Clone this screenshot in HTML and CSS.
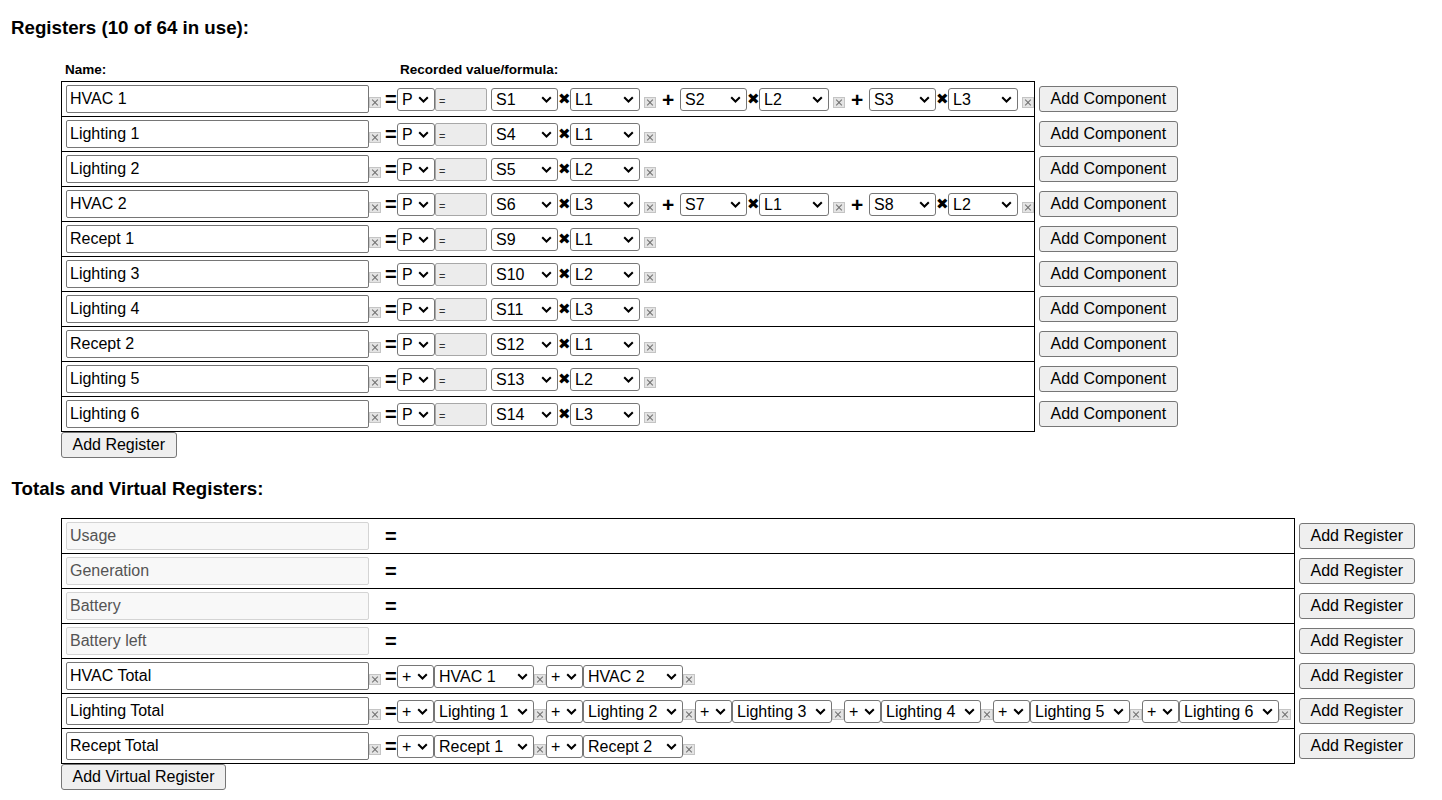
FILE: index.html
```
<!DOCTYPE html>
<html lang="en">
<head>
  <meta charset="UTF-8">
  <title>Registers</title>
  <link rel="stylesheet" href="styles.css">
</head>
<body>
  <h3 class="section-title">Registers (10 of 64 in use):</h3>
  <div class="block">
    <div class="col-labels">
      <span class="lbl-name">Name:</span>
      <span class="lbl-formula">Recorded value/formula:</span>
    </div>
    <div class="reg-table">

      <div class="reg-row">
        <div class="cells">
          <input class="name" type="text" value="HVAC 1"><span class="del"></span><b class="eq">=</b>
          <select class="unit"><option>P</option><option>Q</option></select><span class="formula">=</span>
          <select class="sel-s"><option>S1</option></select><b class="times">✖</b><select class="sel-l"><option>L1</option></select><span class="del gap"></span>
          <b class="plus">+</b>
          <select class="sel-s"><option>S2</option></select><b class="times">✖</b><select class="sel-l"><option>L2</option></select><span class="del gap"></span>
          <b class="plus">+</b>
          <select class="sel-s"><option>S3</option></select><b class="times">✖</b><select class="sel-l"><option>L3</option></select><span class="del gap"></span>
        </div>
        <button>Add Component</button>
      </div>

      <div class="reg-row">
        <div class="cells">
          <input class="name" type="text" value="Lighting 1"><span class="del"></span><b class="eq">=</b>
          <select class="unit"><option>P</option><option>Q</option></select><span class="formula">=</span>
          <select class="sel-s"><option>S4</option></select><b class="times">✖</b><select class="sel-l"><option>L1</option></select><span class="del gap"></span>
        </div>
        <button>Add Component</button>
      </div>

      <div class="reg-row">
        <div class="cells">
          <input class="name" type="text" value="Lighting 2"><span class="del"></span><b class="eq">=</b>
          <select class="unit"><option>P</option><option>Q</option></select><span class="formula">=</span>
          <select class="sel-s"><option>S5</option></select><b class="times">✖</b><select class="sel-l"><option>L2</option></select><span class="del gap"></span>
        </div>
        <button>Add Component</button>
      </div>

      <div class="reg-row">
        <div class="cells">
          <input class="name" type="text" value="HVAC 2"><span class="del"></span><b class="eq">=</b>
          <select class="unit"><option>P</option><option>Q</option></select><span class="formula">=</span>
          <select class="sel-s"><option>S6</option></select><b class="times">✖</b><select class="sel-l"><option>L3</option></select><span class="del gap"></span>
          <b class="plus">+</b>
          <select class="sel-s"><option>S7</option></select><b class="times">✖</b><select class="sel-l"><option>L1</option></select><span class="del gap"></span>
          <b class="plus">+</b>
          <select class="sel-s"><option>S8</option></select><b class="times">✖</b><select class="sel-l"><option>L2</option></select><span class="del gap"></span>
        </div>
        <button>Add Component</button>
      </div>

      <div class="reg-row">
        <div class="cells">
          <input class="name" type="text" value="Recept 1"><span class="del"></span><b class="eq">=</b>
          <select class="unit"><option>P</option><option>Q</option></select><span class="formula">=</span>
          <select class="sel-s"><option>S9</option></select><b class="times">✖</b><select class="sel-l"><option>L1</option></select><span class="del gap"></span>
        </div>
        <button>Add Component</button>
      </div>

      <div class="reg-row">
        <div class="cells">
          <input class="name" type="text" value="Lighting 3"><span class="del"></span><b class="eq">=</b>
          <select class="unit"><option>P</option><option>Q</option></select><span class="formula">=</span>
          <select class="sel-s"><option>S10</option></select><b class="times">✖</b><select class="sel-l"><option>L2</option></select><span class="del gap"></span>
        </div>
        <button>Add Component</button>
      </div>

      <div class="reg-row">
        <div class="cells">
          <input class="name" type="text" value="Lighting 4"><span class="del"></span><b class="eq">=</b>
          <select class="unit"><option>P</option><option>Q</option></select><span class="formula">=</span>
          <select class="sel-s"><option>S11</option></select><b class="times">✖</b><select class="sel-l"><option>L3</option></select><span class="del gap"></span>
        </div>
        <button>Add Component</button>
      </div>

      <div class="reg-row">
        <div class="cells">
          <input class="name" type="text" value="Recept 2"><span class="del"></span><b class="eq">=</b>
          <select class="unit"><option>P</option><option>Q</option></select><span class="formula">=</span>
          <select class="sel-s"><option>S12</option></select><b class="times">✖</b><select class="sel-l"><option>L1</option></select><span class="del gap"></span>
        </div>
        <button>Add Component</button>
      </div>

      <div class="reg-row">
        <div class="cells">
          <input class="name" type="text" value="Lighting 5"><span class="del"></span><b class="eq">=</b>
          <select class="unit"><option>P</option><option>Q</option></select><span class="formula">=</span>
          <select class="sel-s"><option>S13</option></select><b class="times">✖</b><select class="sel-l"><option>L2</option></select><span class="del gap"></span>
        </div>
        <button>Add Component</button>
      </div>

      <div class="reg-row">
        <div class="cells">
          <input class="name" type="text" value="Lighting 6"><span class="del"></span><b class="eq">=</b>
          <select class="unit"><option>P</option><option>Q</option></select><span class="formula">=</span>
          <select class="sel-s"><option>S14</option></select><b class="times">✖</b><select class="sel-l"><option>L3</option></select><span class="del gap"></span>
        </div>
        <button>Add Component</button>
      </div>

    </div>
    <button>Add Register</button>
  </div>

  <h3 class="section-title totals-title">Totals and Virtual Registers:</h3>
  <div class="block totals">
    <div class="reg-table">

      <div class="reg-row">
        <div class="cells">
          <input class="name" type="text" value="Usage" disabled><span class="del-space"></span><b class="eq">=</b>
        </div>
        <button>Add Register</button>
      </div>

      <div class="reg-row">
        <div class="cells">
          <input class="name" type="text" value="Generation" disabled><span class="del-space"></span><b class="eq">=</b>
        </div>
        <button>Add Register</button>
      </div>

      <div class="reg-row">
        <div class="cells">
          <input class="name" type="text" value="Battery" disabled><span class="del-space"></span><b class="eq">=</b>
        </div>
        <button>Add Register</button>
      </div>

      <div class="reg-row">
        <div class="cells">
          <input class="name" type="text" value="Battery left" disabled><span class="del-space"></span><b class="eq">=</b>
        </div>
        <button>Add Register</button>
      </div>

      <div class="reg-row">
        <div class="cells">
          <input class="name" type="text" value="HVAC Total"><span class="del"></span><b class="eq">=</b>
          <select class="sign"><option>+</option><option>-</option></select><select class="ref"><option>HVAC 1</option></select><span class="del"></span><select class="sign"><option>+</option><option>-</option></select><select class="ref"><option>HVAC 2</option></select><span class="del"></span>
        </div>
        <button>Add Register</button>
      </div>

      <div class="reg-row">
        <div class="cells">
          <input class="name" type="text" value="Lighting Total"><span class="del"></span><b class="eq">=</b>
          <select class="sign"><option>+</option><option>-</option></select><select class="ref"><option>Lighting 1</option></select><span class="del"></span><select class="sign"><option>+</option><option>-</option></select><select class="ref"><option>Lighting 2</option></select><span class="del"></span><select class="sign"><option>+</option><option>-</option></select><select class="ref"><option>Lighting 3</option></select><span class="del"></span><select class="sign"><option>+</option><option>-</option></select><select class="ref"><option>Lighting 4</option></select><span class="del"></span><select class="sign"><option>+</option><option>-</option></select><select class="ref"><option>Lighting 5</option></select><span class="del"></span><select class="sign"><option>+</option><option>-</option></select><select class="ref"><option>Lighting 6</option></select><span class="del"></span>
        </div>
        <button>Add Register</button>
      </div>

      <div class="reg-row">
        <div class="cells">
          <input class="name" type="text" value="Recept Total"><span class="del"></span><b class="eq">=</b>
          <select class="sign"><option>+</option><option>-</option></select><select class="ref"><option>Recept 1</option></select><span class="del"></span><select class="sign"><option>+</option><option>-</option></select><select class="ref"><option>Recept 2</option></select><span class="del"></span>
        </div>
        <button>Add Register</button>
      </div>

    </div>
    <button>Add Virtual Register</button>
  </div>
</body>
</html>
```

FILE: styles.css
```
* {
  box-sizing: border-box;
}

body {
  margin: 0;
  font-family: "Liberation Sans", Arial, sans-serif;
  color: #000;
  background: #fff;
}

.section-title {
  margin: 17px 0 0;
  padding-left: 11px;
  font-size: 18.72px;
  line-height: 22px;
}

.totals-title {
  margin-top: 20px;
  padding-left: 11.5px;
}

.block {
  padding-left: 61px;
}

.totals {
  margin-top: 18px;
}

.col-labels {
  display: flex;
  margin: 23px 0 3px 4px;
  font-size: 13.5px;
  font-weight: bold;
  line-height: 16px;
}

.lbl-name {
  width: 335px;
}

/* rows */

.reg-row {
  display: flex;
  align-items: center;
}

.cells {
  display: flex;
  align-items: center;
  width: 974px;
  height: 35px;
  padding-left: 4px;
  border: 1px solid #000;
  border-bottom: none;
}

.cells > * {
  flex-shrink: 0;
}

.totals .cells {
  width: 1234px;
}

.reg-row:last-child .cells {
  height: 36px;
  border-bottom: 1px solid #000;
}

.reg-row button {
  margin-left: 4px;
}

/* form controls */

input, select, button {
  font-family: "Liberation Sans", Arial, sans-serif;
  font-size: 16px;
  color: #000;
}

input.name {
  width: 303px;
  height: 28px;
  padding: 1px 3px;
  border: 1px solid #767676;
  border-radius: 2px;
}

input.name:disabled {
  color: #545454;
  background: #f8f8f8;
  border-color: #d4d4d4;
}

select {
  -webkit-appearance: none;
  appearance: none;
  height: 23px;
  padding: 0 0 0 4px;
  line-height: 21px;
  border: 1px solid #767676;
  border-radius: 3px;
  background: #fff url("data:image/svg+xml,%3Csvg xmlns='http://www.w3.org/2000/svg' width='11' height='7' viewBox='0 0 11 7'%3E%3Cpath d='M1.2 1.2l4.3 4.3 4.3-4.3' fill='none' stroke='%23000' stroke-width='2'/%3E%3C/svg%3E") no-repeat right 5px center;
}

.unit { width: 38px; }
.sel-s { width: 67px; }
.sel-l { width: 70px; }
.sign { width: 37px; }
.ref { width: 100px; }

button {
  height: 26px;
  padding: 0 10.5px;
  background: #efefef;
  border: 1px solid #767676;
  border-radius: 3px;
  white-space: nowrap;
}

/* symbols */

.eq, .plus, .times {
  text-align: center;
  line-height: 1;
}

.eq {
  width: 11px;
  margin: 0 1px 0 4px;
  font-size: 20px;
}

.plus {
  width: 12px;
  margin: 0 6px;
  font-size: 21px;
}

.times {
  width: 12px;
  font-family: "DejaVu Sans", sans-serif;
  font-size: 15px;
}

.formula {
  width: 52px;
  height: 23px;
  margin-right: 4px;
  padding: 7px 0 0 3px;
  font-size: 11px;
  line-height: 11px;
  color: #333;
  background: #ececec;
  border: 1px solid #a8a8a8;
  border-radius: 2px;
}

.del, .del-space {
  width: 12px;
  height: 11px;
  margin-top: 6px;
}

.del {
  position: relative;
  background: #e4e4e4;
  border: 1px solid #c4c4c4;
}

.del.gap {
  margin-left: 4px;
}

.del::before, .del::after {
  content: "";
  position: absolute;
  left: 1px;
  top: 4px;
  width: 8px;
  height: 1px;
  background: #6f6f6f;
}

.del::before {
  transform: rotate(45deg);
}

.del::after {
  transform: rotate(-45deg);
}
```
